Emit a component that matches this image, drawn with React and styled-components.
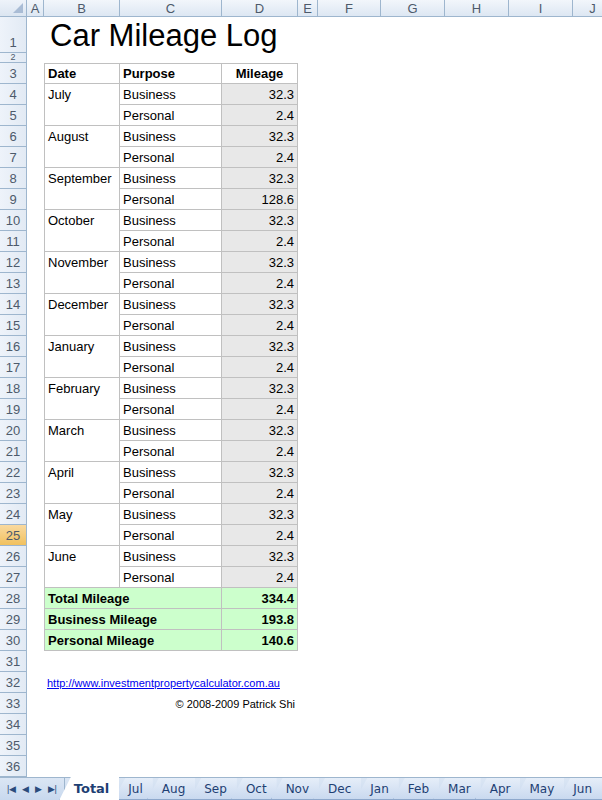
import React from 'react';
import styled, { createGlobalStyle } from 'styled-components';

const Global = createGlobalStyle`
  body { margin: 0; background: #fff; font-family: "Liberation Sans", Arial, sans-serif; overflow: hidden; }
`;

const COLS = [
  { id: 'A', w: 17 }, { id: 'B', w: 76 }, { id: 'C', w: 102 }, { id: 'D', w: 76 },
  { id: 'E', w: 20 }, { id: 'F', w: 63 }, { id: 'G', w: 64 }, { id: 'H', w: 64 },
  { id: 'I', w: 64 }, { id: 'J', w: 40 },
];

const Sheet = styled.div`
  width: 602px;
  height: 800px;
  display: flex;
  flex-direction: column;
  overflow: hidden;
`;

const Row = styled.div`
  display: flex;
  height: ${p => p.h}px;
  flex: none;
`;

const Corner = styled.div`
  width: 27px;
  flex: none;
  background: linear-gradient(#eef3fa, #dbe5f1);
  border-right: 1px solid #9eb6ce;
  border-bottom: 1px solid #9eb6ce;
  box-sizing: border-box;
  position: relative;
  &::after {
    content: '';
    position: absolute;
    right: 3px;
    bottom: 3px;
    border-left: 10px solid transparent;
    border-bottom: 10px solid #a9bcd5;
  }
`;

const ColHead = styled.div`
  width: ${p => p.w}px;
  flex: none;
  box-sizing: border-box;
  background: linear-gradient(#f2f6fb, #dde7f3);
  border-right: 1px solid #9eb6ce;
  border-bottom: 1px solid #9eb6ce;
  font-size: 13px;
  color: #4d5a6b;
  display: flex;
  align-items: center;
  justify-content: center;
`;

const RowHead = styled.div`
  width: 27px;
  flex: none;
  box-sizing: border-box;
  background: ${p => (p.sel ? 'linear-gradient(#f9d99f, #f1c15f)' : 'linear-gradient(90deg, #eef3fa, #e2eaf4)')};
  border-right: 1px solid #9eb6ce;
  border-bottom: 1px solid #9eb6ce;
  font-size: ${p => (p.tiny ? 9 : 13)}px;
  color: #4d5a6b;
  display: flex;
  align-items: ${p => (p.tiny ? 'center' : 'flex-end')};
  justify-content: center;
  padding-bottom: ${p => (p.tiny ? 0 : 2)}px;
  overflow: hidden;
  line-height: ${p => (p.tiny ? 9 : 15)}px;
`;

const Cell = styled.div`
  width: ${p => p.w}px;
  flex: none;
  box-sizing: border-box;
  font-size: 13px;
  color: #000;
  display: flex;
  align-items: ${p => (p.top ? 'flex-start' : 'center')};
  justify-content: ${p => p.align || 'flex-start'};
  padding: ${p => (p.top ? '3px 3px 0' : '0 3px')};
  background: ${p => p.bg || 'transparent'};
  font-weight: ${p => (p.bold ? 700 : 400)};
  border-right: ${p => (p.bd ? '1px solid #c0c0c0' : 'none')};
  border-bottom: ${p => (p.bb ? '1px solid #c0c0c0' : 'none')};
  border-left: ${p => (p.bl ? '1px solid #c0c0c0' : 'none')};
  border-top: ${p => (p.bt ? '1px solid #c0c0c0' : 'none')};
  white-space: nowrap;
  overflow: visible;
`;

const Title = styled.div`
  font-size: 31px;
  padding-left: 3px;
  padding-top: 2px;
  line-height: 34px;
  white-space: nowrap;
`;

const Link = styled.a`
  font-size: 11px;
  color: #0000ee;
  text-decoration: underline;
`;

const Small = styled.span`
  font-size: 11px;
`;

const TabBar = styled.div`
  flex: 1;
  display: flex;
  align-items: flex-start;
  background: linear-gradient(#dbe6f4, #c7d8ee);
  border-top: 1px solid #9eb6ce;
`;

const Nav = styled.div`
  width: 70px;
  height: 22px;
  display: flex;
  align-items: center;
  justify-content: space-around;
  padding: 0 4px;
  box-sizing: border-box;
  color: #2a4b7c;
  font-size: 9px;
  border-right: 1px solid #9eb6ce;
`;

const Tab = styled.div`
  height: ${p => (p.active ? 23 : 21)}px;
  margin-top: ${p => (p.active ? -1 : 0)}px;
  margin-left: -6px;
  padding: 0 10px 0 14px;
  display: flex;
  align-items: center;
  font-family: "DejaVu Sans", Verdana, sans-serif;
  font-size: ${p => (p.active ? 13 : 12)}px;
  font-weight: ${p => (p.active ? 700 : 400)};
  color: #1e3f73;
  background: ${p => (p.active ? '#fff' : 'linear-gradient(#e6eef9, #c9d9ef)')};
  clip-path: polygon(12px 0, 100% 0, 100% 100%, 0 100%);
  border-left: 1px solid #8ea8cc;
  border-bottom: 1px solid #8ea8cc;
  position: relative;
  z-index: ${p => (p.active ? 2 : 1)};
  &:first-of-type { margin-left: 2px; }
`;

const months = ['July', 'August', 'September', 'October', 'November', 'December', 'January', 'February', 'March', 'April', 'May', 'June'];
const personal = { September: '128.6' };
const tabs = ['Jul', 'Aug', 'Sep', 'Oct', 'Nov', 'Dec', 'Jan', 'Feb', 'Mar', 'Apr', 'May', 'Jun'];

const W = COLS.map(c => c.w);
const rest = W.slice(4);

function Tail() {
  return rest.map((w, i) => <Cell key={i} w={w} />);
}

export default function App() {
  const rows = [];
  rows.push(
    <Row h={36} key="1">
      <RowHead>1</RowHead>
      <Cell w={W[0]} />
      <Cell w={W[1] + W[2] + W[3]}><Title>Car Mileage Log</Title></Cell>
      <Tail />
    </Row>
  );
  rows.push(
    <Row h={10} key="2">
      <RowHead tiny>2</RowHead>
      <Cell w={W[0]} /><Cell w={W[1]} /><Cell w={W[2]} /><Cell w={W[3]} /><Tail />
    </Row>
  );
  rows.push(
    <Row h={21} key="3">
      <RowHead>3</RowHead>
      <Cell w={W[0]} />
      <Cell w={W[1]} bold bd bb bl bt>Date</Cell>
      <Cell w={W[2]} bold bd bb bt>Purpose</Cell>
      <Cell w={W[3]} bold bd bb bt align="center">Mileage</Cell>
      <Tail />
    </Row>
  );
  let n = 4;
  months.forEach(m => {
    rows.push(
      <Row h={21} key={n}>
        <RowHead>{n}</RowHead>
        <Cell w={W[0]} />
        <Cell w={W[1]} bd bl top>{m}</Cell>
        <Cell w={W[2]} bd bb>Business</Cell>
        <Cell w={W[3]} bd bb bg="#e8e8e8" align="flex-end">32.3</Cell>
        <Tail />
      </Row>
    );
    n++;
    rows.push(
      <Row h={21} key={n}>
        <RowHead sel={n === 25}>{n}</RowHead>
        <Cell w={W[0]} />
        <Cell w={W[1]} bd bb bl />
        <Cell w={W[2]} bd bb>Personal</Cell>
        <Cell w={W[3]} bd bb bg="#e8e8e8" align="flex-end">{personal[m] || '2.4'}</Cell>
        <Tail />
      </Row>
    );
    n++;
  });
  [['Total Mileage', '334.4'], ['Business Mileage', '193.8'], ['Personal Mileage', '140.6']].forEach(([l, v]) => {
    rows.push(
      <Row h={21} key={n}>
        <RowHead>{n}</RowHead>
        <Cell w={W[0]} />
        <Cell w={W[1] + W[2]} bold bd bb bl bg="#ccffcc">{l}</Cell>
        <Cell w={W[3]} bold bd bb bg="#ccffcc" align="flex-end">{v}</Cell>
        <Tail />
      </Row>
    );
    n++;
  });
  for (; n <= 36; n++) {
    let content = null;
    if (n === 32) content = <Cell w={W[1] + W[2] + W[3]}><Link href="#">http://www.investmentpropertycalculator.com.au</Link></Cell>;
    else if (n === 33) content = <Cell w={W[1] + W[2] + W[3]} align="flex-end"><Small>© 2008-2009 Patrick Shi</Small></Cell>;
    else content = <Cell w={W[1] + W[2] + W[3]} />;
    rows.push(
      <Row h={21} key={n}>
        <RowHead>{n}</RowHead>
        <Cell w={W[0]} />
        {content}
        <Tail />
      </Row>
    );
  }

  return (
    <Sheet>
      <Global />
      <Row h={17}>
        <Corner />
        {COLS.map(c => <ColHead key={c.id} w={c.w}>{c.id}</ColHead>)}
      </Row>
      {rows}
      <TabBar>
        <Nav><span>|◀</span><span>◀</span><span>▶</span><span>▶|</span></Nav>
        <Tab active>Total</Tab>
        {tabs.map(t => <Tab key={t}>{t}</Tab>)}
      </TabBar>
    </Sheet>
  );
}
